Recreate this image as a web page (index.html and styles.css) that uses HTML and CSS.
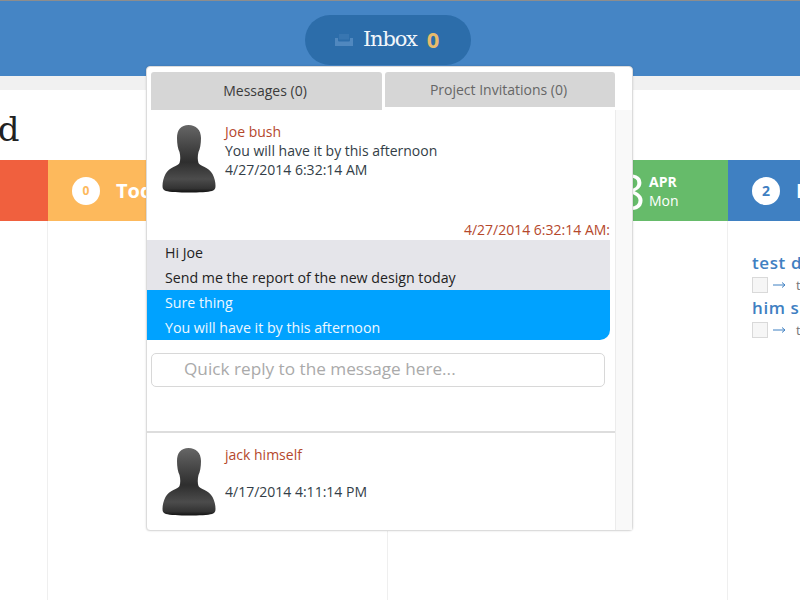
FILE: index.html
```html
<!DOCTYPE html>
<html lang="en">
<head>
<meta charset="UTF-8">
<title>Dashboard</title>
<link rel="stylesheet" href="styles.css">
</head>
<body>
    <svg class="defs" width="0" height="0">
        <defs>
            <linearGradient id="bust-fill" x1="0" y1="0" x2="0" y2="1">
                <stop offset="0" stop-color="#666"/>
                <stop offset="0.3" stop-color="#474747"/>
                <stop offset="0.55" stop-color="#2e2e2e"/>
                <stop offset="0.8" stop-color="#4c4c4c"/>
                <stop offset="0.94" stop-color="#333"/>
                <stop offset="1" stop-color="#111"/>
            </linearGradient>
            <symbol id="bust" viewBox="0 0 54 68">
                <path fill="url(#bust-fill)" d="M26.500 0C19 0 15 5 15 13C15 19 16 24 17.500 27C18.500 31 18.500 35 17.500 38C16.500 41 7 42 3.500 49C1.500 53 .5 57 .5 61C.5 64 1.500 65 4 66C11 68 43 68 50 66C52.500 65 53.500 64 53.500 61C53.500 57 52.500 53 50.500 49C47 42 37.500 41 36.500 38C35.500 35 35.500 31 36.500 27C38 24 39 19 39 13C39 5 34 0 26.500 0z"/>
            </symbol>
            <symbol id="arrow" viewBox="0 0 13 8">
                <path fill="none" stroke="currentColor" d="M0 4h11.500M9 1.500l3 2.500-3 2.500"/>
            </symbol>
        </defs>
    </svg>

    <div class="topbar">
        <div class="inbox-pill">
            <svg class="inbox-icon" width="18" height="12" viewBox="0 0 18 12">
                <path fill="currentColor" d="M0 4h3v2c0 1 .5 1.500 1.500 1.500h9c1 0 1.500-.5 1.500-1.500V4h3v8H0z"/>
                <path fill="currentColor" d="M4 0h10v5.500H4z" opacity=".35"/>
            </svg>
            <span class="inbox-label">Inbox</span>
            <span class="inbox-count">0</span>
        </div>
    </div>
    <div class="strip"></div>

    <div class="page">
        <h1 class="page-title">Dashboard</h1>
        <div class="board">
            <div class="col">
                <div class="col-head red"></div>
            </div>
            <div class="col">
                <div class="col-head orange">
                    <span class="count">0</span>
                    <span class="col-title">Today</span>
                </div>
            </div>
            <div class="col">
                <div class="col-head green">
                    <span class="day">28</span>
                    <span class="date"><b>APR</b><br>Mon</span>
                </div>
            </div>
            <div class="col">
                <div class="col-head blue">
                    <span class="count count-blue">2</span>
                    <span class="col-title">Projects</span>
                </div>
                <div class="tasks">
                    <a class="task-name">test design</a>
                    <div class="task-row"><span class="check"></span><svg class="arrow"><use href="#arrow"/></svg><span class="task-text">test</span></div>
                    <a class="task-name">him send</a>
                    <div class="task-row"><span class="check"></span><svg class="arrow"><use href="#arrow"/></svg><span class="task-text">test</span></div>
                </div>
            </div>
        </div>
    </div>

    <div class="popover">
        <div class="tabs">
            <div class="tab active">Messages (0)</div>
            <div class="tab">Project Invitations (0)</div>
        </div>
        <div class="pop-body">
            <div class="list">
                <div class="msg">
                    <svg class="avatar"><use href="#bust"/></svg>
                    <div class="msg-text">
                        <div class="name">Joe bush</div>
                        <div>You will have it by this afternoon</div>
                        <div>4/27/2014 6:32:14 AM</div>
                    </div>
                </div>
                <div class="stamp">4/27/2014 6:32:14 AM:</div>
                <div class="thread">
                    <div class="bubble them">Hi Joe<br>Send me the report of the new design today</div>
                    <div class="bubble me">Sure thing<br>You will have it by this afternoon</div>
                </div>
                <div class="reply">Quick reply to the message here...</div>
                <div class="msg second">
                    <svg class="avatar"><use href="#bust"/></svg>
                    <div class="msg-text">
                        <div class="name">jack himself</div>
                        <div class="when">4/17/2014 4:11:14 PM</div>
                    </div>
                </div>
            </div>
            <div class="scroll"></div>
        </div>
    </div>
</body>
</html>
```

FILE: styles.css
```css
body, html {
    height: 100%;
    margin: 0;
    padding: 0;
    overflow: hidden;
    background-color: white;
    font-family: "Open Sans", sans-serif;
}

.defs {
    position: absolute;
}

/* TOP BAR */
.topbar {
    box-sizing: border-box;
    height: 76px;
    padding: 14px 0 0 305px;
    background-color: #4585c5;
    border-top: 1px solid #8d8d8d;
}
.strip {
    height: 14px;
    background-color: #f1f1f1;
}
.inbox-pill {
    display: flex;
    align-items: center;
    box-sizing: border-box;
    width: 166px;
    height: 50px;
    padding: 0 0 2px 30px;
    background-color: #2c6daa;
    border-radius: 25px;
}
.inbox-icon {
    margin-top: 2px;
    color: #5088bf;
}
.inbox-label {
    margin-left: 10px;
    font-family: "DejaVu Serif", serif;
    font-size: 21px;
    letter-spacing: -1.2px;
    color: #f2f6fa;
}
.inbox-count {
    margin-left: 10px;
    font-size: 22px;
    font-weight: 700;
    color: #e8bb6c;
}

/* BOARD */
.page {
    height: 510px;
}
.page-title {
    height: 70px;
    margin: 0 0 0 -168px;
    font-family: "DejaVu Serif", serif;
    font-size: 34px;
    font-weight: normal;
    line-height: 78px;
    color: #222;
}
.board {
    display: flex;
    width: 1360px;
    height: 440px;
    margin-left: -292px;
}
.col {
    flex: 0 0 340px;
    box-sizing: border-box;
    border-right: 1px solid #efefef;
}
.col-head {
    display: flex;
    align-items: center;
    height: 61px;
    margin-right: -1px;
    padding-left: 24px;
    color: white;
}
.red { background-color: #f0603e; }
.orange { background-color: #fdb95c; }
.green { background-color: #66bb6a; justify-content: flex-end; padding-right: 36px; }
.blue { background-color: #3f80c2; }

.count {
    display: flex;
    align-items: center;
    justify-content: center;
    width: 28px;
    height: 28px;
    border-radius: 50%;
    background-color: white;
    color: #fdb95c;
    font-size: 12px;
    font-weight: 700;
}
.count-blue {
    color: #3f80c2;
    font-size: 14px;
}
.col-title {
    margin-left: 16px;
    font-size: 20px;
    font-weight: 700;
    white-space: nowrap;
}
.day {
    font-size: 49px;
    line-height: 50px;
}
.date {
    width: 43px;
    margin-left: 4px;
    font-size: 14px;
    line-height: 19px;
}

.tasks {
    padding: 31px 0 0 24px;
}
.task-name {
    display: block;
    font-size: 17px;
    font-weight: 600;
    line-height: 22px;
    letter-spacing: 0.6px;
    color: #3f80c2;
}
.task-row {
    display: flex;
    align-items: center;
    box-sizing: border-box;
    height: 23px;
    padding-bottom: 2px;
    font-size: 13px;
    color: #777;
}
.check {
    box-sizing: border-box;
    width: 16px;
    height: 16px;
    background-color: #f6f6f6;
    border: 1px solid #d9d9d9;
}
.arrow {
    width: 13px;
    height: 8px;
    margin-left: 5px;
    color: #3f80c2;
}
.task-text {
    margin-left: 10px;
}

/* POPOVER */
.popover {
    position: absolute;
    top: 66px;
    left: 146px;
    box-sizing: border-box;
    width: 487px;
    height: 465px;
    background-color: white;
    border: 1px solid #dcdcdc;
    border-radius: 4px;
    box-shadow: 0 0 2px rgba(0, 0, 0, 0.15);
    color: #333e47;
    font-size: 14px;
    line-height: 19px;
}
.tabs {
    display: flex;
    gap: 3px;
    box-sizing: border-box;
    height: 43px;
    padding: 5px 17px 0 4px;
}
.tab {
    flex: 0 0 230px;
    box-sizing: border-box;
    height: 35px;
    padding-right: 3px;
    background-color: #d6d6d6;
    border-radius: 3px 3px 0 0;
    text-align: center;
    line-height: 35px;
    color: #666;
}
.tab.active {
    flex-basis: 231px;
    height: 38px;
    line-height: 37px;
    color: #3b3b3b;
}
.pop-body {
    display: flex;
    height: 420px;
}
.list {
    flex: 0 0 468px;
}
.scroll {
    flex: 1;
    background-color: #f9f9f9;
    border-left: 1px solid #ececec;
}
.msg {
    display: flex;
    gap: 9px;
    padding: 12px 0 0 15px;
}
.avatar {
    flex: none;
    width: 54px;
    height: 68px;
    margin-top: 3px;
}
.name {
    color: #b5482c;
}
.stamp {
    margin: 27px 0 1px;
    padding-right: 5px;
    text-align: right;
    color: #b5482c;
}
.thread {
    margin-right: 5px;
    font-size: 14.2px;
}
.bubble {
    box-sizing: border-box;
    height: 50px;
    padding: 0 0 2px 18px;
    line-height: 25px;
}
.them {
    background-color: #e5e5ea;
    color: #222;
}
.me {
    background-color: #00a2ff;
    border-radius: 0 0 10px 0;
    color: #eef8ff;
}
.reply {
    box-sizing: border-box;
    width: 454px;
    height: 34px;
    margin: 13px 0 44px 4px;
    padding-left: 32px;
    border: 1px solid #d8d8d8;
    border-radius: 5px;
    font-size: 17.2px;
    line-height: 30px;
    color: #aaa;
}
.second {
    box-sizing: border-box;
    height: 98px;
    border-top: 2px solid #ddd;
}
.when {
    margin-top: 18px;
}
```
